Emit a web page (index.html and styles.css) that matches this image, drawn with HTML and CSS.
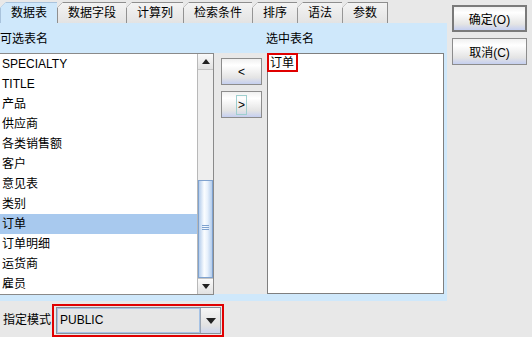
FILE: index.html
```html
<!DOCTYPE html>
<html lang="zh">
<head>
    <meta charset="UTF-8">
    <title>选择表</title>
    <link rel="stylesheet" href="styles.css">
</head>
<body>
    <div class="dialog">
        <div class="main">
            <div class="tabs">
                <div class="tab active">数据表</div>
                <div class="tab">数据字段</div>
                <div class="tab">计算列</div>
                <div class="tab">检索条件</div>
                <div class="tab">排序</div>
                <div class="tab">语法</div>
                <div class="tab last">参数</div>
            </div>

            <div class="panel">
                <div class="labels">
                    <span>可选表名</span>
                    <span></span>
                    <span class="label-right">选中表名</span>
                </div>
                <div class="lists">
                    <!-- available tables -->
                    <div class="scroll-pane">
                        <ul class="table-list">
                            <li>SPECIALTY</li>
                            <li>TITLE</li>
                            <li>产品</li>
                            <li>供应商</li>
                            <li>各类销售额</li>
                            <li>客户</li>
                            <li>意见表</li>
                            <li>类别</li>
                            <li class="selected">订单</li>
                            <li>订单明细</li>
                            <li>运货商</li>
                            <li>雇员</li>
                        </ul>
                        <div class="scrollbar">
                            <div class="sb-btn"><span class="arrow-up"></span></div>
                            <div class="sb-track"><div class="sb-thumb"></div></div>
                            <div class="sb-btn"><span class="arrow-down"></span></div>
                        </div>
                    </div>

                    <div class="mover">
                        <button class="btn move-btn">&lt;</button>
                        <button class="btn move-btn"><span class="focus">&gt;</span></button>
                    </div>

                    <!-- chosen tables -->
                    <div class="picked">
                        <span class="picked-item">订单</span>
                    </div>
                </div>
            </div>

            <div class="mode-row">
                <span class="mode-label">指定模式</span>
                <div class="mode-frame">
                    <div class="combo">
                        <div class="combo-field">PUBLIC</div>
                        <div class="combo-btn"><span class="arrow-down"></span></div>
                    </div>
                </div>
            </div>
        </div>

        <div class="side">
            <button class="btn side-btn default">确定(<u>O</u>)</button>
            <button class="btn side-btn">取消(<u>C</u>)</button>
        </div>
    </div>
</body>
</html>
```

FILE: styles.css
```css
body {
    margin: 0;
    width: 532px;
    height: 337px;
    overflow: hidden;
    background-color: #e8e8e8;
    font-family: "Liberation Sans", "Noto Sans CJK SC", sans-serif;
    font-size: 12px;
    color: #000;
}
.dialog {
    display: flex;
}
.main {
    width: 447px;
}

/* tabs */
.tabs {
    display: flex;
    align-items: flex-end;
    height: 23px;
}
.tab {
    height: 20px;
    line-height: 20px;
    padding: 0 10px;
    border-top: 1px solid #8e8e8e;
    border-left: 1px solid #8e8e8e;
    clip-path: polygon(6px 0, 100% 0, 100% 100%, 0 100%, 0 6px);
    background: linear-gradient(135deg, transparent 3.4px, #8e8e8e 3.4px, #8e8e8e 4.6px, transparent 4.6px),
                linear-gradient(#f4f4f4, #e3e3e3);
    background-origin: border-box;
}
.tab.last {
    border-right: 1px solid #8e8e8e;
}
.tab.active {
    border-color: #a9c3dc;
    background: linear-gradient(135deg, transparent 3.4px, #a9c3dc 3.4px, #a9c3dc 4.6px, transparent 4.6px),
                #cfe8fb;
    background-origin: border-box;
}

/* tab body */
.panel {
    background-color: #cfe8fb;
    padding: 0 3px 6px 0;
}
.labels {
    display: grid;
    grid-template-columns: 214px 53px 177px;
    height: 30px;
    line-height: 32px;
}
.label-right {
    margin-left: -1px;
}
.lists {
    display: grid;
    grid-template-columns: 214px 53px 177px;
    height: 242px;
}
.scroll-pane {
    display: flex;
    border-top: 1px solid #8a8a8a;
    border-bottom: 1px solid #8a8a8a;
    border-right: 1px solid #8a8a8a;
    background: #fff;
}
.table-list {
    flex: 1;
    margin: 0;
    padding: 0;
    list-style: none;
    overflow: hidden;
}
.table-list li {
    height: 20px;
    line-height: 20px;
    padding-left: 2px;
    white-space: nowrap;
}
.table-list li.selected {
    background-color: #a8c9ee;
}
.scrollbar {
    width: 15px;
    display: flex;
    flex-direction: column;
    border-left: 1px solid #b8b8b8;
    background: #eeeeee;
}
.sb-btn {
    height: 16px;
    display: flex;
    align-items: center;
    justify-content: center;
    background: linear-gradient(#fafafa, #e2e2e2);
    border-bottom: 1px solid #c4c4c4;
    box-sizing: border-box;
}
.sb-btn:last-child {
    border-bottom: none;
    border-top: 1px solid #c4c4c4;
}
.sb-track {
    flex: 1;
    display: flex;
    flex-direction: column;
    justify-content: flex-end;
}
.sb-thumb {
    height: 98px;
    border: 1px solid #7fa2cf;
    box-sizing: border-box;
    position: relative;
    background: linear-gradient(to right, #b4cdec, #fbfdff 40%, #e8f1fc 65%, #b4cdec);
}
.sb-thumb::after {
    content: "";
    position: absolute;
    left: 3px;
    right: 3px;
    top: 44px;
    height: 6px;
    background: repeating-linear-gradient(#7fa2cf 0 1px, transparent 1px 2px);
}
.arrow-up {
    width: 0;
    height: 0;
    border-left: 4px solid transparent;
    border-right: 4px solid transparent;
    border-bottom: 5px solid #222;
}
.arrow-down {
    width: 0;
    height: 0;
    border-left: 4px solid transparent;
    border-right: 4px solid transparent;
    border-top: 5px solid #222;
}

/* buttons */
.btn {
    font-family: inherit;
    font-size: 12px;
    color: #000;
    padding: 0;
    border: 1px solid #8c8c8c;
    background: linear-gradient(#f0f0f0 0%, #ffffff 25%, #e4e4e4 75%, #c5cff0 100%);
}
.mover {
    display: flex;
    flex-direction: column;
    gap: 6px;
    padding: 5px 0 0 7px;
    background-color: #e8e8e8;
    margin-bottom: 1px;
}
.move-btn {
    width: 41px;
    height: 27px;
}
.focus {
    border: 1px solid #9fcfcf;
    padding: 2px 1px;
}
.picked {
    background: #fff;
    border: 1px solid #7f7f7f;
    margin-bottom: 1px;
}
.picked-item {
    display: inline-block;
    height: 19px;
    line-height: 17px;
    padding: 0 2px 0 1px;
    border: 2px solid #e00000;
    box-sizing: border-box;
    margin-left: -1px;
    margin-top: -1px;
}

/* schema row */
.mode-row {
    display: flex;
    align-items: flex-start;
    height: 36px;
    padding-left: 3px;
}
.mode-label {
    width: 49px;
    line-height: 38px;
}
.mode-frame {
    margin-top: 3px;
    border: 2px solid #e00000;
    padding: 1px 1px 1px 2px;
}
.combo {
    display: flex;
    width: 165px;
    height: 27px;
    border: 1px solid #8a9099;
    box-sizing: border-box;
}
.combo-field {
    flex: 1;
    border: 1px solid #a6c3e6;
    background: #e6e6e6;
    line-height: 23px;
    padding-left: 2px;
}
.combo-btn {
    width: 19px;
    display: flex;
    align-items: center;
    justify-content: center;
    background: linear-gradient(#f6f6f6, #e2e2e2 70%, #cdd6ee);
    border-left: 1px solid #9aa4b2;
}
.combo-btn .arrow-down {
    border-left-width: 5px;
    border-right-width: 5px;
    border-top-width: 6px;
}

/* OK / Cancel */
.side {
    display: flex;
    flex-direction: column;
    gap: 6px;
    padding: 5px 0 0 5px;
}
.side-btn {
    width: 75px;
    height: 27px;
}
.side-btn.default {
    border: 2px solid #7a7a7a;
}
.side-btn u {
    text-decoration: none;
}
```
